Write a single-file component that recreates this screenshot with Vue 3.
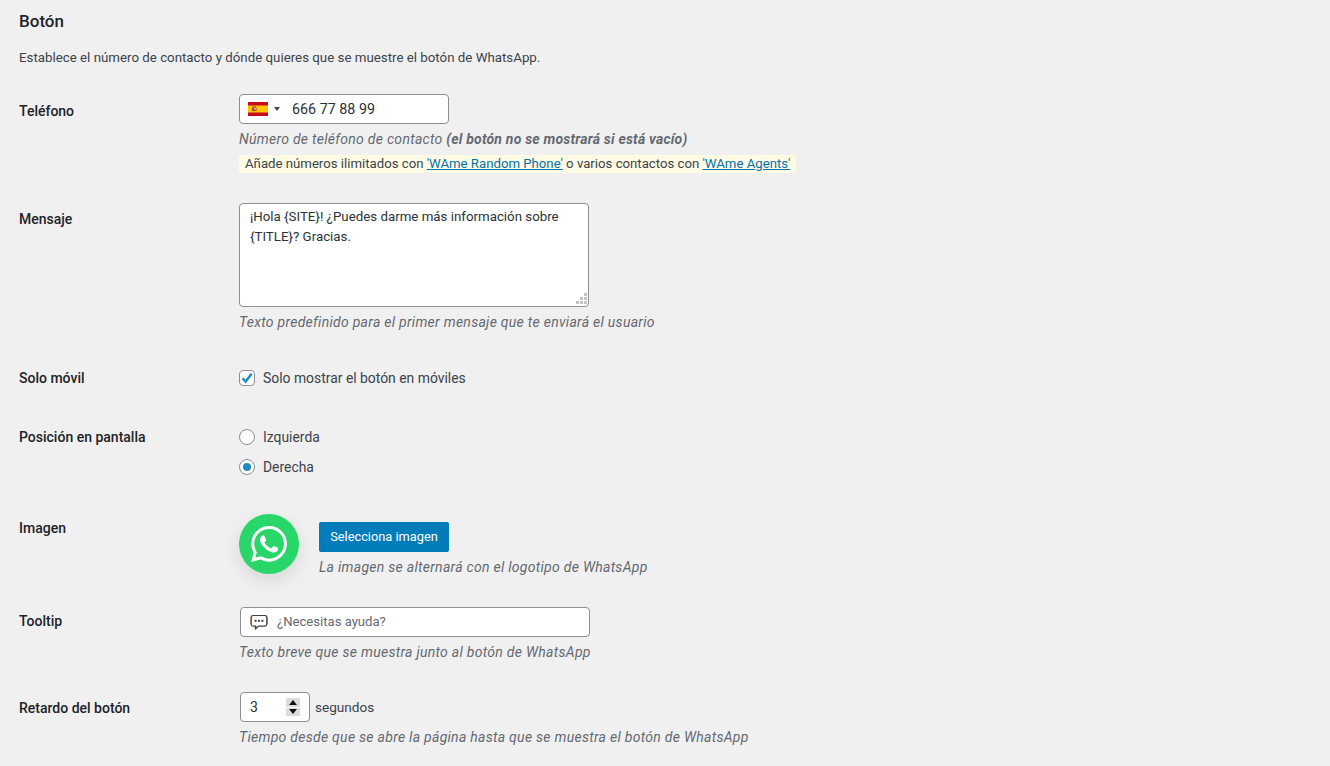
<script setup>
const message = '¡Hola {SITE}! ¿Puedes darme más información sobre {TITLE}? Gracias.'
const grip = [[8, 0], [4, 4], [8, 4], [0, 8], [4, 8], [8, 8]]
</script>

<template>
  <div class="page">
    <h2 class="title">Botón</h2>
    <p class="intro">Establece el número de contacto y dónde quieres que se muestre el botón de WhatsApp.</p>

    <div class="row row-phone">
      <div class="label">Teléfono</div>
      <div class="field">
        <div class="input phone">
          <svg class="flag" width="20" height="14" viewBox="0 0 20 14" aria-hidden="true">
            <rect width="20" height="14" fill="#c60b1e" />
            <rect y="3.5" width="20" height="7" fill="#ffc400" />
            <rect x="4" y="5.5" width="4.5" height="3.5" fill="#b5391c" />
            <rect x="4.5" y="4" width="3.5" height="1.5" fill="#a8861f" />
            <rect x="6" y="6" width="2" height="2" fill="#c9a2a0" />
          </svg>
          <span class="caret"></span>
          <input class="bare phone-num" value="666 77 88 99" />
        </div>
        <p class="note">Número de teléfono de contacto <b>(el botón no se mostrará si está vacío)</b></p>
        <p class="promo">
          <span>Añade números ilimitados con <a href="#">'WAme Random Phone'</a> o varios contactos con <a href="#">'WAme Agents'</a></span>
        </p>
      </div>
    </div>

    <div class="row row-message">
      <div class="label">Mensaje</div>
      <div class="field">
        <div class="area-wrap">
          <textarea class="input area" :value="message"></textarea>
          <svg class="grip" width="11" height="11" viewBox="0 0 11 11" aria-hidden="true">
            <rect v-for="g in grip" :key="g.join()" :x="g[0]" :y="g[1]" width="3" height="3" fill="#c4c4c4" />
          </svg>
        </div>
        <p class="note">Texto predefinido para el primer mensaje que te enviará el usuario</p>
      </div>
    </div>

    <div class="row row-mobile">
      <div class="label">Solo móvil</div>
      <div class="field">
        <label class="choice">
          <span class="check">
            <svg width="14" height="14" viewBox="0 0 14 14" aria-hidden="true">
              <path d="M2.6 7.2 5.6 10.6 11.6 2.8" fill="none" stroke="#1e8cbe" stroke-width="2.4" />
            </svg>
          </span>
          Solo mostrar el botón en móviles
        </label>
      </div>
    </div>

    <div class="row row-position">
      <div class="label">Posición en pantalla</div>
      <div class="field radios">
        <label class="choice"><span class="radio"></span>Izquierda</label>
        <label class="choice"><span class="radio on"></span>Derecha</label>
      </div>
    </div>

    <div class="row row-image">
      <div class="label">Imagen</div>
      <div class="image-field">
        <div class="wa">
          <svg width="36" height="36" viewBox="0 0 24 24" aria-hidden="true">
            <path fill="#fff" d="M17.472 14.382c-.297-.149-1.758-.867-2.03-.967-.273-.099-.471-.148-.67.15-.197.297-.767.966-.94 1.164-.173.199-.347.223-.644.075-.297-.15-1.255-.463-2.39-1.475-.883-.788-1.48-1.761-1.653-2.059-.173-.297-.018-.458.13-.606.134-.133.298-.347.446-.52.149-.174.198-.298.298-.497.099-.198.05-.371-.025-.52-.075-.149-.669-1.612-.916-2.207-.242-.579-.487-.5-.669-.51-.173-.008-.371-.01-.57-.01-.198 0-.52.074-.792.372-.272.297-1.04 1.016-1.04 2.479 0 1.462 1.065 2.875 1.213 3.074.149.198 2.096 3.2 5.077 4.487.709.306 1.262.489 1.694.625.712.227 1.36.195 1.871.118.571-.085 1.758-.719 2.006-1.413.248-.694.248-1.289.173-1.413-.074-.124-.272-.198-.57-.347m-5.421 7.403h-.004a9.87 9.87 0 01-5.031-1.378l-.361-.214-3.741.982.998-3.648-.235-.374a9.86 9.86 0 01-1.51-5.26c.001-5.45 4.436-9.884 9.888-9.884 2.64 0 5.122 1.03 6.988 2.898a9.825 9.825 0 012.893 6.994c-.003 5.45-4.437 9.884-9.885 9.884m8.413-18.297A11.815 11.815 0 0012.05 0C5.495 0 .16 5.335.157 11.892c0 2.096.547 4.142 1.588 5.945L.057 24l6.305-1.654a11.882 11.882 0 005.683 1.448h.005c6.554 0 11.89-5.335 11.893-11.893a11.821 11.821 0 00-3.48-8.413Z" />
          </svg>
        </div>
        <div class="image-side">
          <button class="btn" type="button">Selecciona imagen</button>
          <p class="note">La imagen se alternará con el logotipo de WhatsApp</p>
        </div>
      </div>
    </div>

    <div class="row row-tooltip">
      <div class="label">Tooltip</div>
      <div class="field shifted">
        <div class="input tooltip">
          <svg class="bubble" width="18" height="18" viewBox="0 0 18 18" aria-hidden="true">
            <path d="M.7 4.2v7.2M5 13.8v2.4" fill="none" stroke="#f0a040" stroke-width="1" />
            <path d="M17.3 4.2v7.2" fill="none" stroke="#4aa3e0" stroke-width="1" />
            <path d="M3 2.5h12a1.8 1.8 0 0 1 1.8 1.8v7a1.8 1.8 0 0 1-1.8 1.8H8.5L5.7 15.8v-2.7H3a1.8 1.8 0 0 1-1.8-1.8v-7A1.8 1.8 0 0 1 3 2.5Z" fill="none" stroke="#3c434a" stroke-width="1.2" />
            <rect x="4.6" y="6.8" width="2" height="2" fill="#3c434a" />
            <rect x="8" y="6.8" width="2" height="2" fill="#3c434a" />
            <rect x="11.4" y="6.8" width="2" height="2" fill="#3c434a" />
          </svg>
          <input class="bare tip-text" placeholder="¿Necesitas ayuda?" />
        </div>
        <p class="note">Texto breve que se muestra junto al botón de WhatsApp</p>
      </div>
    </div>

    <div class="row row-delay">
      <div class="label">Retardo del botón</div>
      <div class="field shifted">
        <div class="delay">
          <div class="input number">
            <input class="bare num" value="3" />
            <span class="spin">
              <span class="half"><i class="up"></i></span>
              <span class="half"><i class="down"></i></span>
            </span>
          </div>
          <span class="unit">segundos</span>
        </div>
        <p class="note">Tiempo desde que se abre la página hasta que se muestra el botón de WhatsApp</p>
      </div>
    </div>
  </div>
</template>

<style>
html,
body {
  background: #f0f0f1;
}
</style>

<style scoped>
.page {
  height: 766px;
  overflow: hidden;
  box-sizing: border-box;
  padding: 0 19px;
  background: #f0f0f1;
  color: #3c434a;
  font-family: Roboto, "Noto Sans", sans-serif;
  font-size: 14px;
  line-height: 20px;
}

.title {
  margin: 0;
  padding-top: 10px;
  font-size: 17px;
  line-height: 22px;
  font-weight: 500;
  color: #1d2327;
}

.intro {
  margin: 16px 0 0;
  height: 20px;
  font-size: 13.3px;
}

.row {
  display: grid;
  grid-template-columns: 220px 1fr;
}

.label {
  font-weight: 500;
  color: #1d2327;
}

.row-phone { margin-top: 26px; }
.row-phone .label { padding-top: 7px; }
.row-message { margin-top: 30px; }
.row-message .label { padding-top: 6px; }
.row-mobile { margin-top: 36px; }
.row-position { margin-top: 39px; }
.row-image { margin-top: 37px; }
.row-image .label { padding-top: 4px; }
.row-tooltip { margin-top: 30px; }
.row-tooltip .label { padding-top: 4px; }
.row-delay { margin-top: 30px; }
.row-delay .label { padding-top: 6px; }

.shifted { padding-left: 1px; }
.shifted .note:last-child { margin-left: -1px; }

.input {
  box-sizing: border-box;
  background: #fff;
  border: 1px solid #8c8f94;
  border-radius: 4px;
  color: #2c3338;
}

.bare {
  border: 0;
  outline: 0;
  padding: 0;
  background: transparent;
  font: inherit;
  color: #2c3338;
  min-width: 0;
}

.phone {
  width: 210px;
  height: 30px;
  display: flex;
  align-items: center;
  padding-left: 8px;
}

.flag { flex-shrink: 0; }

.caret {
  width: 0;
  height: 0;
  margin-left: 6px;
  border-left: 3px solid transparent;
  border-right: 3px solid transparent;
  border-top: 4px solid #444;
  flex-shrink: 0;
}

.phone-num {
  margin-left: 12px;
  flex: 1;
  font-size: 14.3px;
}

.note {
  margin: 5px 0 0;
  font-style: italic;
  color: #646970;
  letter-spacing: 0.28px;
}

.note b {
  letter-spacing: 0.2px;
}

.promo {
  margin: 4px 0 0;
}

.promo span {
  display: inline-block;
  height: 18px;
  line-height: 18px;
  padding: 0 6px;
  background: #fffbe5;
  border-radius: 2px;
  font-size: 13.2px;
}

a {
  color: #0073aa;
}

.area-wrap {
  position: relative;
  width: 350px;
  height: 104px;
}

.area {
  display: block;
  width: 100%;
  height: 100%;
  padding: 3px 10px 2px;
  font: inherit;
  font-size: 13.3px;
  resize: none;
  outline: 0;
}

.grip {
  position: absolute;
  right: 2px;
  bottom: 3px;
}

.choice {
  display: flex;
  align-items: center;
  gap: 8px;
  height: 20px;
  font-size: 13.9px;
}

.check,
.radio {
  box-sizing: border-box;
  width: 16px;
  height: 16px;
  background: #fff;
  border: 1px solid #8c8f94;
  flex-shrink: 0;
  display: flex;
  align-items: center;
  justify-content: center;
}

.check { border-radius: 4px; }
.radio { border-radius: 50%; }

.radio.on::before {
  content: "";
  width: 8px;
  height: 8px;
  border-radius: 50%;
  background: #1e8cbe;
}

.radios {
  display: flex;
  flex-direction: column;
  gap: 10px;
}

.image-field {
  display: flex;
  gap: 20px;
  align-items: flex-start;
}

.wa {
  width: 60px;
  height: 60px;
  border-radius: 50%;
  background: #29d66a;
  box-shadow: 0 7px 18px rgba(0, 0, 0, 0.1);
  display: flex;
  align-items: center;
  justify-content: center;
  flex-shrink: 0;
}

.image-side {
  padding-top: 8px;
}

.btn {
  display: block;
  width: 130px;
  height: 30px;
  padding: 0;
  border: 0;
  border-radius: 2px;
  background: #007cba;
  color: #fff;
  font: inherit;
  font-size: 12.8px;
}

.tooltip {
  width: 350px;
  height: 30px;
  display: flex;
  align-items: center;
  padding-left: 9px;
}

.bubble { flex-shrink: 0; }

.tip-text {
  margin-left: 9px;
  flex: 1;
  font-size: 13.1px;
}

.tip-text::placeholder {
  color: #646970;
  opacity: 1;
}

.delay {
  display: flex;
  align-items: center;
  gap: 5px;
}

.unit {
  font-size: 13.6px;
}

.number {
  width: 70px;
  height: 30px;
  display: flex;
  align-items: center;
  padding-left: 9px;
}

.num {
  width: 36px;
}

.spin {
  width: 14px;
  height: 18px;
  display: flex;
  flex-direction: column;
  gap: 1px;
}

.half {
  flex: 1;
  background: #dcdcdc;
  display: flex;
  align-items: center;
  justify-content: center;
}

.spin i {
  width: 0;
  height: 0;
  border-left: 4px solid transparent;
  border-right: 4px solid transparent;
}

.spin .up { border-bottom: 5px solid #111; }
.spin .down { border-top: 5px solid #111; }
</style>
